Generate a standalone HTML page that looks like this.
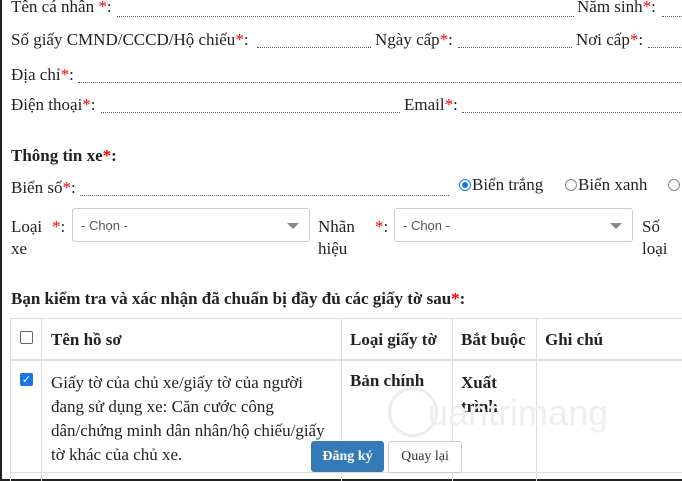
<!DOCTYPE html>
<html><head><meta charset="utf-8"><style>
body{margin:0;width:682px;height:481px;overflow:hidden;background:#fff;position:relative;font-family:"Liberation Serif",serif;font-size:17px;color:#222}
.a{position:absolute;white-space:nowrap;line-height:19px}
.r{color:#e00}
.d{position:absolute;border-bottom:1px dotted #555;height:0}
.b{font-weight:bold}
.sel{position:absolute;border:1px solid #ccc;border-radius:3px;height:32px;background:#fff;font-family:"Liberation Sans",sans-serif;font-size:13px;color:#555}
.sel span{position:absolute;left:8px;top:9px}
.sel i{position:absolute;right:10px;top:14px;border-left:6px solid transparent;border-right:6px solid transparent;border-top:6px solid #888}
.v{position:absolute;background:#ddd;width:1px}
.h{position:absolute;background:#ddd;height:1px}
.rad{position:absolute;width:10px;height:10px;border:1px solid #888;border-radius:50%}
</style></head><body>
<div style="position:absolute;left:0;top:0;width:2px;height:481px;background:#222"></div>
<div style="position:absolute;left:0;top:479px;width:682px;height:2px;background:#222"></div>

<div class="a" style="left:11px;top:-3px">Tên cá nhân <span class="r">*</span>:</div>
<div class="d" style="left:117px;width:457px;top:16px"></div>
<div class="a" style="left:577px;top:-3px">Năm sinh<span class="r">*</span>:</div>
<div class="d" style="left:662px;width:20px;top:16px"></div>

<div class="a" style="left:11px;top:30px">Số giấy CMND/CCCD/Hộ chiếu<span class="r">*</span>:</div>
<div class="d" style="left:257px;width:114px;top:47px"></div>
<div class="a" style="left:375px;top:30px">Ngày cấp<span class="r">*</span>:</div>
<div class="d" style="left:458px;width:114px;top:47px"></div>
<div class="a" style="left:576px;top:30px">Nơi cấp<span class="r">*</span>:</div>
<div class="d" style="left:648px;width:34px;top:47px"></div>

<div class="a" style="left:11px;top:65px">Địa chỉ<span class="r">*</span>:</div>
<div class="d" style="left:78px;width:604px;top:82px"></div>

<div class="a" style="left:11px;top:95px">Điện thoại<span class="r">*</span>:</div>
<div class="d" style="left:101px;width:299px;top:112px"></div>
<div class="a" style="left:404px;top:95px">Email<span class="r">*</span>:</div>
<div class="d" style="left:462px;width:220px;top:112px"></div>

<div class="a b" style="left:11px;top:146px">Thông tin xe<span class="r">*</span>:</div>

<div class="a" style="left:11px;top:178px">Biển số<span class="r">*</span>:</div>
<div class="d" style="left:80px;width:369px;top:195px"></div>
<div class="rad" style="left:459px;top:179px;border-color:#1a73e8"><div style="position:absolute;left:2px;top:2px;width:6px;height:6px;border-radius:50%;background:#1a73e8"></div></div>
<div class="a" style="left:472px;top:175px">Biển trắng</div>
<div class="rad" style="left:565px;top:179px"></div>
<div class="a" style="left:578px;top:175px">Biển xanh</div>
<div class="rad" style="left:668px;top:179px"></div>

<div class="a" style="left:11px;top:217px">Loại</div>
<div class="a" style="left:11px;top:239px">xe</div>
<div class="a" style="left:52px;top:217px"><span class="r">*</span>:</div>
<div class="sel" style="left:72px;top:208px;width:236px"><span>- Chọn -</span><i></i></div>
<div class="a" style="left:318px;top:217px">Nhãn</div>
<div class="a" style="left:318px;top:239px">hiệu</div>
<div class="a" style="left:375px;top:217px"><span class="r">*</span>:</div>
<div class="sel" style="left:394px;top:208px;width:237px"><span>- Chọn -</span><i></i></div>
<div class="a" style="left:642px;top:217px">Số</div>
<div class="a" style="left:642px;top:239px">loại</div>

<div class="a b" style="left:11px;top:289px">Bạn kiểm tra và xác nhận đã chuẩn bị đầy đủ các giấy tờ sau<span class="r">*</span>:</div>

<div class="h" style="left:10px;top:318px;width:672px"></div>
<div class="h" style="left:10px;top:359px;width:672px;height:2px"></div>
<div class="h" style="left:10px;top:472px;width:672px"></div>
<div class="v" style="left:10px;top:318px;height:163px"></div>
<div class="v" style="left:41px;top:318px;height:163px"></div>
<div class="v" style="left:341px;top:318px;height:163px"></div>
<div class="v" style="left:452px;top:318px;height:163px"></div>
<div class="v" style="left:536px;top:318px;height:163px"></div>

<div style="position:absolute;left:20px;top:331px;width:11px;height:11px;border:1px solid #666;border-radius:2px"></div>
<div class="a b" style="left:51px;top:330px">Tên hồ sơ</div>
<div class="a b" style="left:350px;top:330px">Loại giấy tờ</div>
<div class="a b" style="left:461px;top:330px">Bắt buộc</div>
<div class="a b" style="left:545px;top:330px">Ghi chú</div>

<div style="position:absolute;left:20px;top:373px;width:13px;height:13px;background:#1a73e8;border-radius:2px;color:#fff;font-size:11px;line-height:13px;text-align:center;font-family:'DejaVu Sans',sans-serif;font-weight:bold">✓</div>
<div class="a" style="left:51px;top:371px;line-height:24px">Giấy tờ của chủ xe/giấy tờ của người<br>đang sử dụng xe: Căn cước công<br>dân/chứng minh dân nhân/hộ chiếu/giấy<br>tờ khác của chủ xe.</div>
<div class="a b" style="left:350px;top:371px">Bản chính</div>
<div class="a b" style="left:461px;top:371px;line-height:24px">Xuất<br>trình</div>

<div style="position:absolute;left:388px;top:387px;width:44px;height:44px;border:3px solid #ececec;border-radius:50%"></div>
<div class="a" style="left:428px;top:393px;font-family:'Liberation Sans',sans-serif;font-size:36px;line-height:40px;color:#eeeeee">uantrimang</div>

<div style="position:absolute;left:311px;top:441px;width:73px;height:31px;background:#337ab7;border-radius:3px;color:#fff;font-weight:bold;font-size:14px;line-height:31px;text-align:center">Đăng ký</div>
<div style="position:absolute;left:388px;top:441px;width:72px;height:30px;border:1px solid #ccc;border-radius:3px;background:#fff;color:#333;font-size:14px;line-height:30px;text-align:center">Quay lại</div>
</body></html>
